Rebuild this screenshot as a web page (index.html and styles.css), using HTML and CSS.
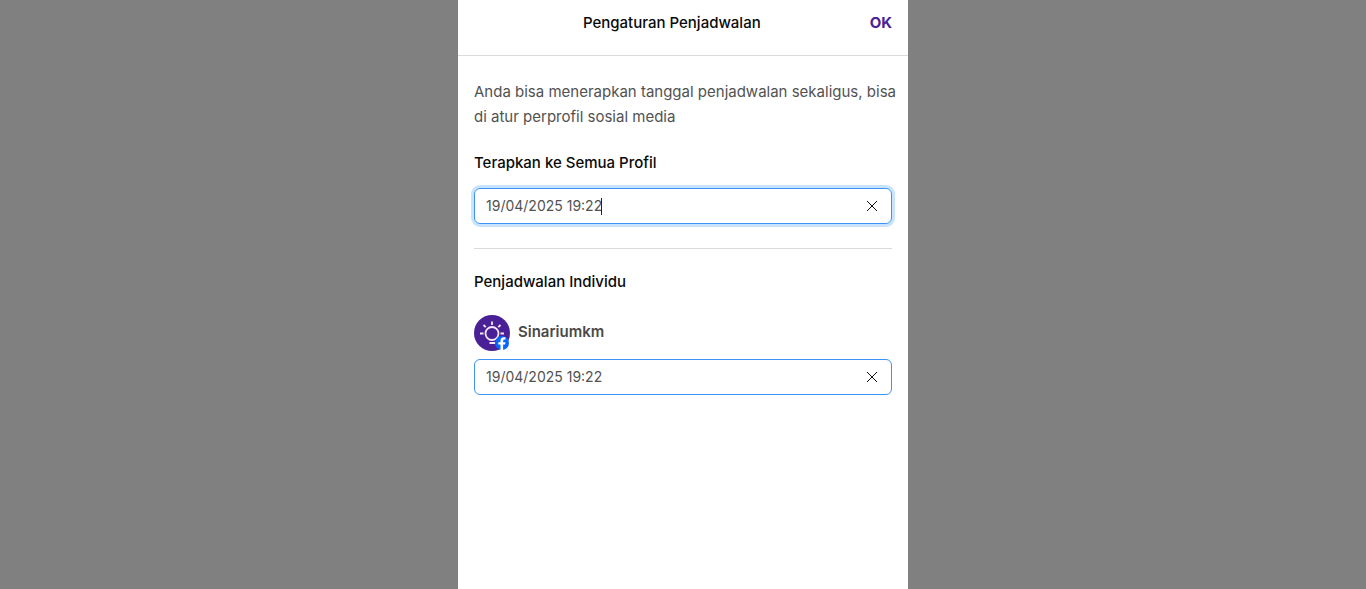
FILE: index.html
```html
<!DOCTYPE html>
<html lang="id">
<head>
<meta charset="utf-8">
<meta name="viewport" content="width=device-width, initial-scale=1">
<title>Pengaturan Penjadwalan</title>
<link rel="stylesheet" href="styles.css">
</head>
<body>
<main class="panel">
  <header class="panel-header">
    <h1 class="title">Pengaturan Penjadwalan</h1>
    <button class="ok" type="button">OK</button>
  </header>
  <div class="content">
    <p class="intro">Anda bisa menerapkan tanggal penjadwalan sekaligus, bisa<br>di atur perprofil sosial media</p>
    <label class="label" for="all">Terapkan ke Semua Profil</label>
    <div class="field field-focus">
      <input class="date" id="all" type="text" value="19/04/2025 19:22">
      <span class="caret" aria-hidden="true"></span>
      <button class="clear" type="button" aria-label="Hapus"><svg width="12" height="12" viewBox="0 0 12 12"><path d="M1 1l10 10M11 1L1 11"/></svg></button>
    </div>
    <hr class="divider">
    <h2 class="subtitle">Penjadwalan Individu</h2>
    <label class="profile" for="one">
      <svg class="avatar" width="36" height="36" viewBox="0 0 36 36" aria-hidden="true">
        <circle cx="18" cy="18" r="18" fill="#4a2096"/>
        <g fill="none" stroke="#f3e6f5" stroke-width="1.800">
          <circle cx="18" cy="18.500" r="6.500"/>
          <path d="M18 6.500v3.500M9.500 10l2.200 2.200M26.500 10l-2.200 2.200M6 18.500h3.500M26.500 18.500H30M15.500 28h6"/>
        </g>
        <circle cx="28" cy="28" r="7" fill="#0866ff"/>
        <path fill="#fff" d="M26.500 35v-5.500h-2.200v-2.300h2.200V26q0-3.700 3.400-3.700h1.600v2.300h-1.200q-1.200 0-1.200 1.300v1.300h2.400l-.4 2.300h-2V35z"/>
      </svg>
      <span class="name">Sinariumkm</span>
    </label>
    <div class="field">
      <input class="date" id="one" type="text" value="19/04/2025 19:22">
      <button class="clear" type="button" aria-label="Hapus"><svg width="12" height="12" viewBox="0 0 12 12"><path d="M1 1l10 10M11 1L1 11"/></svg></button>
    </div>
  </div>
</main>
</body>
</html>
```
FILE: styles.css
```css
* { box-sizing: border-box; }
body {
  margin: 0;
  background: #808080;
  color: #525252;
  font: 15px/25px Inter, "Liberation Sans", sans-serif;
}
button, input { font: inherit; color: inherit; }
button { border: 0; padding: 0; background: none; cursor: pointer; }
.panel {
  max-width: 450px;
  min-height: 100vh;
  margin: 0 auto;
  background: #fff;
}
.panel-header {
  display: flex;
  padding: 10px 16px 20px;
  border-bottom: 1px solid #dbdbdb;
}
.title {
  flex: 1;
  margin: 0;
  color: #0a0a0a;
  font-size: 15px;
  font-weight: 500;
  text-align: center;
}
.ok {
  color: #4a2096;
  font-weight: 700;
}
.content { padding: 23px 16px; }
.intro {
  margin: 0 0 21px;
  white-space: nowrap;
}
.label, .subtitle {
  display: block;
  margin: 0;
  color: #0a0a0a;
  font-size: 15px;
  font-weight: 500;
}
.field {
  display: flex;
  align-items: center;
  position: relative;
  height: 36px;
  border: 1px solid #3b94f5;
  border-radius: 6px;
}
.label + .field { margin-top: 13px; }
.field-focus { box-shadow: 0 0 0 3px #c9e3ff; }
.date {
  flex: 1;
  min-width: 0;
  height: 100%;
  padding: 0 11px 2px;
  border: 0;
  outline: 0;
  background: transparent;
  font-size: 14px;
}
.caret {
  position: absolute;
  left: 126px;
  width: 1px;
  height: 17px;
  background: #222;
}
.clear {
  display: flex;
  align-items: center;
  justify-content: center;
  width: 38px;
  height: 34px;
}
.clear path { fill: none; stroke: #111; stroke-width: 1; }
.divider {
  height: 1px;
  margin: 24px 0 20px;
  border: 0;
  background: #dbdbdf;
}
.profile {
  display: flex;
  align-items: center;
  gap: 8px;
  margin: 21px 0 8px;
}
.name {
  padding-bottom: 4px;
  color: #4a4a4a;
  font-weight: 600;
}
```
